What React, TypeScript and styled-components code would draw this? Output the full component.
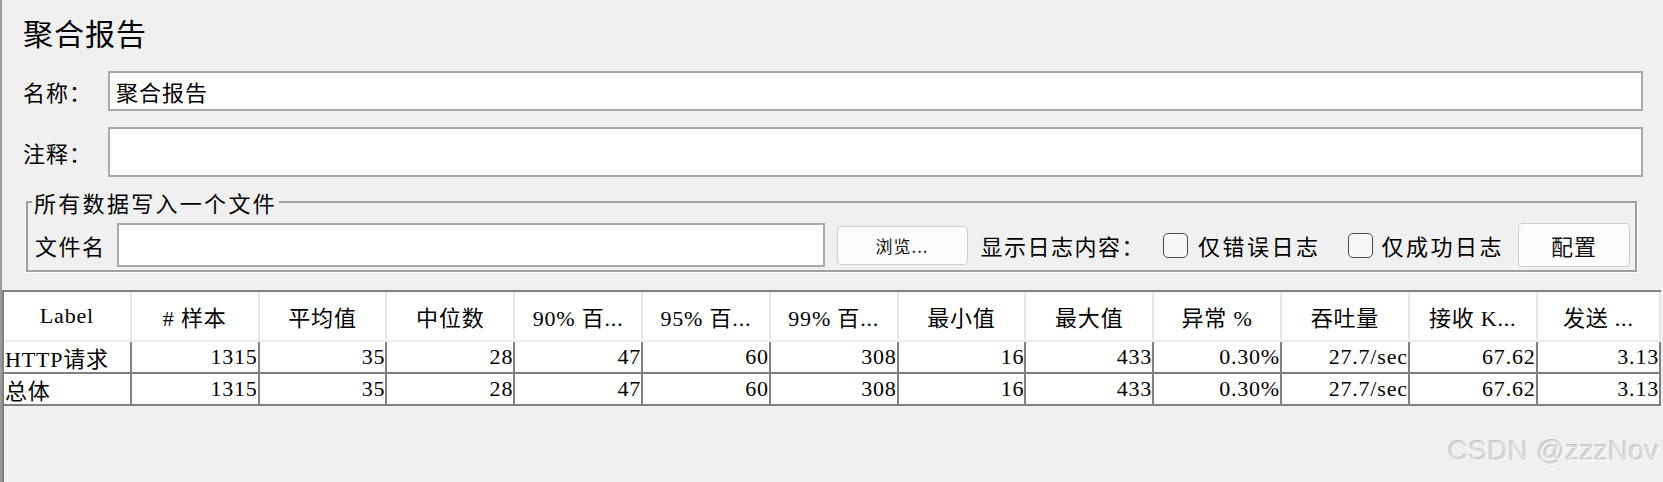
import React from "react";
import styled, { createGlobalStyle } from "styled-components";

const GlobalStyle = createGlobalStyle`
  html, body {
    margin: 0;
    padding: 0;
    background: #f0f0f0;
    overflow: hidden;
  }
  * {
    box-sizing: border-box;
  }
`;

const CJK = `"Noto Sans CJK SC", "Noto Sans", sans-serif`;
const MIXED = `"Liberation Serif", "Noto Sans CJK SC", serif`;

const Page = styled.div`
  position: relative;
  width: 1663px;
  height: 482px;
  display: flex;
  flex-direction: column;
  background: #f0f0f0;
  border-left: 2px solid #9a9a9a;
  font-family: ${CJK};
  color: #000;
  overflow: hidden;
`;

const Top = styled.div`
  display: flex;
  flex-direction: column;
  padding: 0 20px 0 21px;
`;

const Title = styled.div`
  margin-top: 10px;
  height: 44px;
  line-height: 44px;
  font-size: 30px;
  letter-spacing: 1px;
`;

const FieldRow = styled.div<{ $gap: number; $h: number }>`
  display: flex;
  align-items: center;
  margin-top: ${(p) => p.$gap}px;
  height: ${(p) => p.$h}px;
`;

const FieldLabel = styled.div`
  width: 85px;
  font-size: 22px;
  letter-spacing: 1px;
`;

const TextBox = styled.div<{ $w?: number }>`
  ${(p) => (p.$w ? `width: ${p.$w}px;` : "flex: 1;")}
  height: 100%;
  background: #fff;
  border: 2px solid #aaaaaa;
  display: flex;
  align-items: center;
  padding-left: 6px;
  font-size: 22px;
  letter-spacing: 1px;
`;

const Group = styled.fieldset`
  margin: 13px 6px 0 3px;
  padding: 9px 4px 3px 7px;
  border: 2px solid #a0a0a0;
  box-shadow: 1px 1px 0 #fff;
`;

const Legend = styled.legend`
  padding: 0 2px;
  margin-left: -3px;
  line-height: 24px;
  font-size: 22px;
  letter-spacing: 2.3px;
`;

const GroupRow = styled.div`
  display: flex;
  align-items: center;
  height: 44px;
`;

const RowLabel = styled.span<{ $ml?: number; $ls?: number }>`
  margin-left: ${(p) => p.$ml ?? 0}px;
  font-size: 22px;
  letter-spacing: ${(p) => p.$ls ?? 1.5}px;
  white-space: nowrap;
`;

const Button = styled.button<{ $w: number; $h: number; $fs: number; $ml: number }>`
  margin-left: ${(p) => p.$ml}px;
  width: ${(p) => p.$w}px;
  height: ${(p) => p.$h}px;
  background: #fcfcfc;
  border: 1px solid #cfcfcf;
  border-radius: 4px;
  font-family: ${CJK};
  font-size: ${(p) => p.$fs}px;
  color: #111;
  padding: 0;
  letter-spacing: 1px;
`;

const Check = styled.span<{ $ml: number }>`
  display: inline-block;
  margin-left: ${(p) => p.$ml}px;
  width: 25px;
  height: 25px;
  border: 1.5px solid #4a4a4a;
  border-radius: 5px;
  background: #f7f7f7;
  flex-shrink: 0;
`;

const Pane = styled.div`
  flex: 1;
  margin: 18px 2px 0 0;
  border-top: 2px solid #808080;
  border-left: 2px solid #808080;
  background: #f0f0f0;
`;

const Grid = styled.div`
  display: grid;
  grid-template-columns: repeat(12, 127.8px) 1fr;
  font-family: ${MIXED};
  font-size: 22px;
  letter-spacing: 0.8px;
`;

const HeadCell = styled.div`
  height: 50px;
  background: #fff;
  border-right: 2px solid #e6e6e6;
  border-bottom: 2px solid #ececec;
  display: flex;
  align-items: center;
  justify-content: center;
  white-space: nowrap;
  overflow: hidden;
`;

const Cell = styled.div<{ $left?: boolean }>`
  height: 32px;
  background: #fff;
  border-right: 2px solid #808080;
  border-bottom: 2px solid #808080;
  display: flex;
  align-items: center;
  justify-content: ${(p) => (p.$left ? "flex-start" : "flex-end")};
  padding: ${(p) => (p.$left ? "0 0 0 1px" : "0")};
  white-space: nowrap;
  overflow: hidden;
`;

const Watermark = styled.div`
  position: absolute;
  right: 4px;
  bottom: 17px;
  line-height: 1;
  font-family: "Liberation Sans", Arial, sans-serif;
  font-size: 28px;
  color: #dcdcdc;
  text-shadow: 1px 1px 0 #fdfdfd, -1px -1px 0 #c4c4c4;
  letter-spacing: 0.3px;
`;

const headers = [
  "Label",
  "# 样本",
  "平均值",
  "中位数",
  "90% 百...",
  "95% 百...",
  "99% 百...",
  "最小值",
  "最大值",
  "异常 %",
  "吞吐量",
  "接收 K...",
  "发送 ...",
];

const rows = [
  ["HTTP请求", "1315", "35", "28", "47", "60", "308", "16", "433", "0.30%", "27.7/sec", "67.62", "3.13"],
  ["总体", "1315", "35", "28", "47", "60", "308", "16", "433", "0.30%", "27.7/sec", "67.62", "3.13"],
];

const App = () => {
  return (
    <>
      <GlobalStyle />
      <Page>
        <Top>
          <Title>聚合报告</Title>
          <FieldRow $gap={17} $h={40}>
            <FieldLabel>名称：</FieldLabel>
            <TextBox>聚合报告</TextBox>
          </FieldRow>
          <FieldRow $gap={16} $h={50}>
            <FieldLabel>注释：</FieldLabel>
            <TextBox />
          </FieldRow>
          <Group>
            <Legend>所有数据写入一个文件</Legend>
            <GroupRow>
              <RowLabel>文件名</RowLabel>
              <TextBox $w={708} style={{ marginLeft: 11 }} />
              <Button $w={131} $h={39} $fs={17} $ml={12}>
                浏览...
              </Button>
              <RowLabel $ml={13}>显示日志内容：</RowLabel>
              <Check $ml={18} />
              <RowLabel $ml={10} $ls={2.5}>
                仅错误日志
              </RowLabel>
              <Check $ml={27} />
              <RowLabel $ml={9} $ls={2.5}>
                仅成功日志
              </RowLabel>
              <Button $w={112} $h={44} $fs={22} $ml={14}>
                配置
              </Button>
            </GroupRow>
          </Group>
        </Top>
        <Pane>
          <Grid>
            {headers.map((h) => (
              <HeadCell key={h}>{h}</HeadCell>
            ))}
            {rows.map((r, i) =>
              r.map((v, j) => (
                <Cell key={`${i}-${j}`} $left={j === 0}>
                  {v}
                </Cell>
              ))
            )}
          </Grid>
        </Pane>
        <Watermark>CSDN @zzzNov</Watermark>
      </Page>
    </>
  );
};

export default App;
